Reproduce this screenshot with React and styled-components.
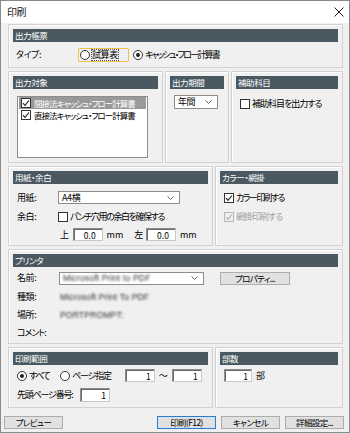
import React from "react";
import styled, { createGlobalStyle } from "styled-components";

const FONT = `"Noto Sans CJK JP", "Noto Sans", sans-serif`;

const Global = createGlobalStyle`
  html, body { margin: 0; padding: 0; background: #dadada; }
  body {
    font-family: ${FONT};
    font-size: 9px;
    line-height: 12px;
    color: #000;
    letter-spacing: -0.4px;
  }
  * {
    box-sizing: border-box;
    font-feature-settings: "palt" 1;
    font-variant-east-asian: proportional-width;
  }
`;

const Window = styled.div`
  width: 350px;
  height: 433px;
  background: #f0f0f0;
  border: 1px solid #8a8a8a;
  display: flex;
  flex-direction: column;
`;

const TitleBar = styled.div`
  height: 22px;
  background: #fff;
  display: flex;
  align-items: center;
  justify-content: space-between;
  padding: 0 5px 0 6px;
  font-size: 10px;
  color: #222;
`;

const Content = styled.div`
  display: flex;
  flex-direction: column;
  gap: 3px;
  padding: 1px 6px 0 7px;
`;

const Row = styled.div`
  display: grid;
  grid-template-columns: ${(p) => p.$cols};
  gap: 2px;
`;

const Group = styled.div`
  border: 1px solid #d2d2d2;
  box-shadow: inset 1px 1px 0 #fff;
  padding: 4px;
  height: ${(p) => p.$h}px;
  display: flex;
  flex-direction: column;
`;

const Header = styled.div`
  height: 13px;
  background: #4a5961;
  color: #fff;
  font-size: 8.5px;
  line-height: 13px;
  padding-left: 2px;
  white-space: nowrap;
  overflow: hidden;
`;

const Line = styled.div`
  display: flex;
  align-items: center;
  height: ${(p) => p.$h || 13}px;
  margin-top: ${(p) => p.$mt || 0}px;
  padding-left: ${(p) => p.$pl || 0}px;
  white-space: nowrap;
`;

const Label = styled.span`
  width: ${(p) => p.$w}px;
  flex: none;
  white-space: nowrap;
  letter-spacing: ${(p) => (p.$ls !== undefined ? p.$ls : -0.4)}px;
`;

const Text = styled.span`
  margin-left: ${(p) => p.$ml || 0}px;
  color: ${(p) => (p.$disabled ? "#a0a0a0" : "inherit")};
  letter-spacing: ${(p) => (p.$ls !== undefined ? p.$ls : -0.4)}px;
  white-space: nowrap;
`;

const Tilde = styled.span`
  margin-left: 4px;
  font-feature-settings: normal;
  font-variant-east-asian: normal;
  letter-spacing: 0;
`;

const FocusBox = styled.span`
  display: inline-flex;
  align-items: center;
  height: 14px;
  width: 51px;
  border: 1px solid #f0c24f;
  border-radius: 1px;
  padding-left: 1px;
`;

const Dotted = styled.span`
  outline: 1px dotted #555;
  outline-offset: -1px;
  padding: 0 1px;
  margin-left: 1px;
`;

const RadioCircle = styled.span`
  width: 10px;
  height: 10px;
  border-radius: 50%;
  border: 1px solid #333;
  background: #fff;
  display: inline-flex;
  align-items: center;
  justify-content: center;
  flex: none;
  margin-left: ${(p) => p.$ml || 0}px;
  &::after {
    content: "";
    width: 4px;
    height: 4px;
    border-radius: 50%;
    background: ${(p) => (p.$checked ? "#222" : "transparent")};
  }
`;

const Box = styled.span`
  width: 10px;
  height: 10px;
  border: 1px solid ${(p) => (p.$disabled ? "#b8b8b8" : "#333")};
  background: ${(p) => (p.$disabled ? "#f0f0f0" : "#fff")};
  display: inline-flex;
  align-items: center;
  justify-content: center;
  flex: none;
  margin-left: ${(p) => p.$ml || 0}px;
`;

const Check = ({ color = "#222" }) => (
  <svg width="8" height="8" viewBox="0 0 8 8">
    <path d="M1 4.2 L3 6.3 L7 1.5" fill="none" stroke={color} strokeWidth="1.1" />
  </svg>
);

const CheckBox = ({ checked, disabled, ml }) => (
  <Box $disabled={disabled} $ml={ml}>
    {checked && <Check color={disabled ? "#b0b0b0" : "#222"} />}
  </Box>
);

const ListBox = styled.div`
  margin: 7px 0 0 4px;
  width: 131px;
  height: 63px;
  background: #fff;
  border: 1px solid #8c8c8c;
  padding: 0 1px;
`;

const ListItem = styled.div`
  display: flex;
  align-items: center;
  height: 12px;
  line-height: 12px;
  padding-left: 2px;
  background: ${(p) => (p.$selected ? "#999" : "transparent")};
  color: ${(p) => (p.$selected ? "#fff" : "#000")};
  font-size: 8.5px;
  white-space: nowrap;
  overflow: hidden;
`;

const Select = styled.div`
  width: ${(p) => p.$w}px;
  height: ${(p) => p.$h || 13}px;
  background: #fff;
  border: 1px solid #8c8c8c;
  display: flex;
  align-items: center;
  justify-content: space-between;
  padding: 0 5px 0 3px;
  margin-left: ${(p) => p.$ml || 0}px;
  margin-top: ${(p) => p.$mt || 0}px;
  flex: none;
`;

const Chevron = () => (
  <svg width="7" height="4" viewBox="0 0 7 4">
    <path d="M0.5 0.5 L3.5 3.5 L6.5 0.5" fill="none" stroke="#555" strokeWidth="0.9" />
  </svg>
);

const NumInput = styled.div`
  width: ${(p) => p.$w}px;
  height: ${(p) => p.$h || 13}px;
  background: #fff;
  border: 1px solid #8c8c8c;
  border-right-color: #c8c8c8;
  border-bottom-color: #c8c8c8;
  box-shadow: inset 1px 1px 0 #6a6a6a;
  display: flex;
  align-items: center;
  justify-content: flex-end;
  padding-right: ${(p) => (p.$pr !== undefined ? p.$pr : 3)}px;
  margin-left: ${(p) => p.$ml || 0}px;
  font-size: 8.5px;
  letter-spacing: 0;
  flex: none;
`;

const Blurred = styled.span`
  filter: blur(1px);
  color: #2a2a2a;
  font-family: "Liberation Sans", sans-serif;
  font-size: 8.5px;
  letter-spacing: 0.2px;
  margin-left: ${(p) => p.$ml || 0}px;
`;

const Button = styled.button`
  width: ${(p) => p.$w || 59}px;
  height: 13px;
  background: #e1e1e1;
  border: 1px solid ${(p) => (p.$default ? "#2f7dc4" : "#adadad")};
  box-shadow: ${(p) => (p.$default ? "inset 0 0 0 1px #cfe3f5" : "none")};
  font-family: ${FONT};
  font-size: 8.5px;
  line-height: 11px;
  letter-spacing: -0.6px;
  padding: 0;
  color: #000;
  margin-left: ${(p) => p.$ml || 0}px;
  flex: none;
`;

const ButtonRow = styled.div`
  display: flex;
  align-items: center;
  margin-top: 8px;
  padding: 0 5px 0 3px;
`;

const Spacer = styled.div`
  flex: 1;
`;

const Close = () => (
  <svg width="10" height="10" viewBox="0 0 10 10">
    <path d="M0.5 0.5 L9.5 9.5 M9.5 0.5 L0.5 9.5" stroke="#222" strokeWidth="1" />
  </svg>
);

export default function App() {
  return (
    <>
      <Global />
      <Window>
        <TitleBar>
          <span>印刷</span>
          <Close />
        </TitleBar>
        <Content>
          <Group $h={44}>
            <Header>出力帳票</Header>
            <Line $h={14} $mt={6} $pl={3}>
              <Label $w={62}>タイプ:</Label>
              <FocusBox>
                <RadioCircle />
                <Dotted>試算表</Dotted>
              </FocusBox>
              <RadioCircle $checked $ml={4} />
              <Text $ml={2} $ls={-1.8}>キャッシュ・フロー計算書</Text>
            </Line>
          </Group>

          <Row $cols="155px 64px 1fr">
            <Group $h={92}>
              <Header>出力対象</Header>
              <ListBox>
                <ListItem $selected>
                  <CheckBox checked />
                  <Text $ml={3} $ls={-1}>間接法キャッシュ・フロー計算書</Text>
                </ListItem>
                <ListItem>
                  <CheckBox checked />
                  <Text $ml={3} $ls={-1}>直接法キャッシュ・フロー計算書</Text>
                </ListItem>
              </ListBox>
            </Group>
            <Group $h={92}>
              <Header>出力期間</Header>
              <Select $w={44} $h={14} $mt={6} $ml={4}>
                <span>年間</span>
                <Chevron />
              </Select>
            </Group>
            <Group $h={92}>
              <Header>補助科目</Header>
              <Line $mt={8} $pl={4}>
                <CheckBox />
                <Text $ml={2} $ls={-1}>補助科目を出力する</Text>
              </Line>
            </Group>
          </Row>

          <Row $cols="205px 1fr">
            <Group $h={80}>
              <Header>用紙・余白</Header>
              <Line $mt={7} $pl={4}>
                <Label $w={41}>用紙:</Label>
                <Select $w={122}>
                  <span>A4横</span>
                  <Chevron />
                </Select>
              </Line>
              <Line $mt={6} $pl={4}>
                <Label $w={41}>余白:</Label>
                <CheckBox />
                <Text $ml={2} $ls={-1.4}>パンチ穴用の余白を確保する</Text>
              </Line>
              <Line $mt={5} $pl={47}>
                <Text>上</Text>
                <NumInput $w={30} $ml={4} $pr={6}>0.0</NumInput>
                <Text $ml={4} $ls={0}>mm</Text>
                <Text $ml={11}>左</Text>
                <NumInput $w={30} $ml={3} $pr={6}>0.0</NumInput>
                <Text $ml={4} $ls={0}>mm</Text>
              </Line>
            </Group>
            <Group $h={80}>
              <Header>カラー・網掛</Header>
              <Line $mt={7} $pl={4}>
                <CheckBox checked />
                <Text $ml={2} $ls={-1.6}>カラー印刷する</Text>
              </Line>
              <Line $mt={6} $pl={4}>
                <CheckBox checked disabled />
                <Text $ml={2} $ls={-1} $disabled>網掛印刷する</Text>
              </Line>
            </Group>
          </Row>

          <Group $h={95}>
            <Header>プリンタ</Header>
            <Line $mt={5} $pl={4}>
              <Label $w={42}>名前:</Label>
              <Select $w={145}>
                <Blurred>Microsoft Print to PDF</Blurred>
                <Chevron />
              </Select>
              <Button $w={70} $ml={16}>プロパティ...</Button>
            </Line>
            <Line $mt={6} $pl={4}>
              <Label $w={42}>種類:</Label>
              <Blurred $ml={1}>Microsoft Print To PDF</Blurred>
            </Line>
            <Line $mt={5} $pl={4}>
              <Label $w={42}>場所:</Label>
              <Blurred $ml={1}>PORTPROMPT:</Blurred>
            </Line>
            <Line $mt={5} $pl={4}>
              <Label $w={42} $ls={-1}>コメント:</Label>
            </Line>
          </Group>

          <Row $cols="205px 1fr">
            <Group $h={61}>
              <Header>印刷範囲</Header>
              <Line $mt={4} $pl={4}>
                <RadioCircle $checked />
                <Text $ml={2} $ls={-1.5}>すべて</Text>
                <RadioCircle $ml={11} />
                <Text $ml={2} $ls={-1.2}>ページ指定</Text>
                <NumInput $w={30} $ml={14}>1</NumInput>
                <Tilde>〜</Tilde>
                <NumInput $w={30} $ml={4}>1</NumInput>
              </Line>
              <Line $h={14} $mt={6} $pl={4}>
                <Label $w={63} $ls={-1.2}>先頭ページ番号:</Label>
                <NumInput $w={30} $h={14}>1</NumInput>
              </Line>
            </Group>
            <Group $h={61}>
              <Header>部数</Header>
              <Line $mt={4} $pl={4}>
                <NumInput $w={28}>1</NumInput>
                <Text $ml={4}>部</Text>
              </Line>
            </Group>
          </Row>
        </Content>
        <ButtonRow>
          <Button>プレビュー</Button>
          <Spacer />
          <Button $default>印刷(F12)</Button>
          <Button $ml={5}>キャンセル</Button>
          <Button $ml={5}>詳細設定...</Button>
        </ButtonRow>
      </Window>
    </>
  );
}
